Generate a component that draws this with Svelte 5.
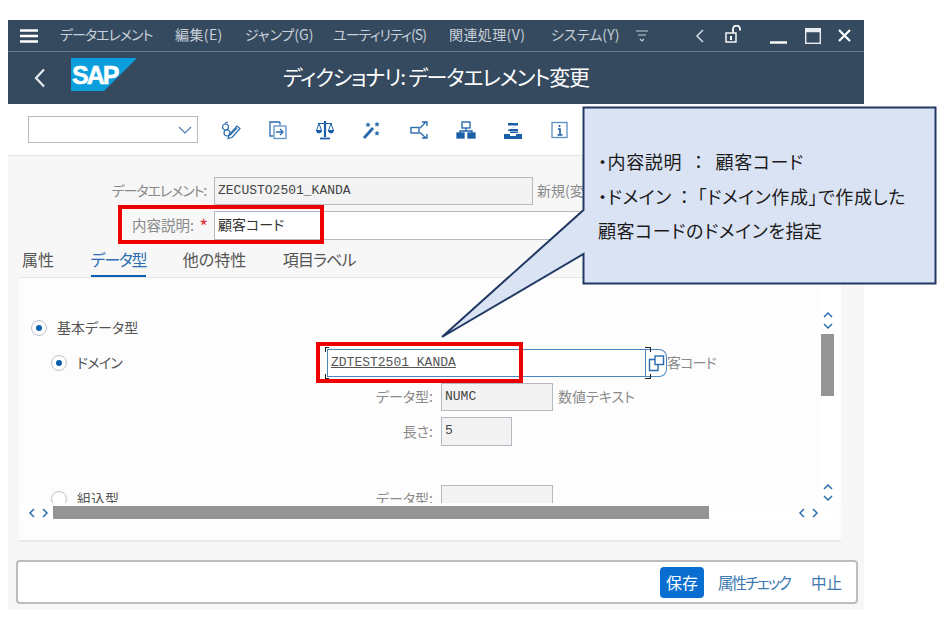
<script lang="ts">
	const menus = [
		{ label: 'データエレメント', w: 115, ls: -1 },
		{ label: '編集(E)', w: 70, ls: 0.4 },
		{ label: 'ジャンプ(G)', w: 88, ls: 0 },
		{ label: 'ユーティリティ(S)', w: 116, ls: -0.9 },
		{ label: '関連処理(V)', w: 102, ls: 0.4 },
		{ label: 'システム(Y)', w: 85, ls: 0.1 }
	];
	const tabs = [
		{ label: '属性', active: false, ls: 0 },
		{ label: 'データ型', active: true, ls: -1.25 },
		{ label: '他の特性', active: false, ls: 0 },
		{ label: '項目ラベル', active: false, ls: -0.8 }
	];
</script>

<div class="page">
	<div class="window">
		<header class="menubar">
			<svg class="burger" width="18" height="14" viewBox="0 0 18 14">
				<path d="M0 1.5h18M0 7h18M0 12.5h18" stroke="#fff" stroke-width="2.4" />
			</svg>
			<div class="menus">
				{#each menus as m}
					<span style="width:{m.w}px;letter-spacing:{m.ls}px">{m.label}</span>
				{/each}
			</div>
			<svg class="more" width="12" height="14" viewBox="0 0 12 14" fill="none" stroke="#c3ccd6">
				<path d="M0 2h12M2 6h8M4 10l2 2 2-2" stroke-width="1.2" />
			</svg>
			<svg class="collapse" width="10" height="16" viewBox="0 0 10 16" fill="none" stroke="#d5dbe2" stroke-width="1.5">
				<path d="M8 2L2 8l6 6" />
			</svg>
			<svg class="lock" width="18" height="18" viewBox="0 0 18 18" fill="none" stroke="#fff" stroke-width="1.4">
				<rect x="1" y="8" width="10" height="9" />
				<path d="M6 11v4" stroke-width="2" />
				<path d="M8 8V4a3.500 3.500 0 0 1 7 0v1.500" stroke-width="1.800" />
			</svg>
			<div class="wincontrols">
				<svg width="17" height="16" viewBox="0 0 17 16"><path d="M0 14.500h17" stroke="#fff" stroke-width="2.400" /></svg>
				<svg width="16" height="16" viewBox="0 0 16 16" fill="none" stroke="#e8ecf0">
					<rect x="0.700" y="0.700" width="14.600" height="14.600" stroke-width="1.400" />
					<path d="M0 2.500h16" stroke-width="3.500" />
				</svg>
				<svg width="13" height="13" viewBox="0 0 13 13"><path d="M1 1l11 11M12 1L1 12" stroke="#fff" stroke-width="2.200" /></svg>
			</div>
		</header>

		<div class="titlebar">
			<svg class="back" width="12" height="20" viewBox="0 0 12 20" fill="none" stroke="#e6ebf0" stroke-width="2.200">
				<path d="M10 1.500L2 10l8 8.500" />
			</svg>
			<svg class="logo" width="66" height="33" viewBox="0 0 66 33">
				<path d="M0 0H66L33 33H0Z" fill="#0a9fdc" />
				<text x="1" y="26" class="logotext">SAP</text>
			</svg>
			<h1>ディクショナリ: データエレメント変更</h1>
		</div>

		<div class="toolbar">
			<div class="select">
				<svg width="14" height="8" viewBox="0 0 14 8" fill="none" stroke="#4a7eb0" stroke-width="1.200">
					<path d="M1 1l6 6 6-6" />
				</svg>
			</div>
			<div class="tools">
				<svg width="20" height="20" viewBox="0 0 20 20" fill="none" stroke="#2a6aad" stroke-width="1.200">
					<circle cx="4.500" cy="7" r="3" />
					<circle cx="6" cy="13" r="3" />
					<path d="M4 4q1-2 3-2" />
					<path d="M8 15L16 6l3 2.500-8 9-4 1Z" />
					<path d="M9 15l7-7" />
				</svg>
				<svg width="20" height="20" viewBox="0 0 20 20" fill="none" stroke="#2a6aad" stroke-width="1.300">
					<path d="M12 2H2v14h3" />
					<path d="M12 2v3" />
					<rect x="6" y="6" width="12" height="12.500" stroke="#5a90c6" />
					<path d="M8 12h7M12 9l3 3-3 3" />
				</svg>
				<svg width="20" height="20" viewBox="0 0 20 20" fill="none" stroke="#1b5fa8" stroke-width="1">
					<path d="M10 1v16" stroke-width="2.200" />
					<path d="M5 18.500h10" stroke-width="1.800" />
					<path d="M3 3.500h14M4 3.500l-2.500 7h5ZM16 3.500l-2.500 7h5Z" />
					<path d="M1.500 10.500a2.500 2.500 0 0 0 5 0ZM13.500 10.500a2.500 2.500 0 0 0 5 0Z" fill="#1b5fa8" />
				</svg>
				<svg width="20" height="20" viewBox="0 0 20 20" fill="#2a6aad" stroke="#2a6aad">
					<path d="M2 18L11 8" stroke-width="3" />
					<path d="M6 2l.8 1.800 1.800.2-1.300 1.200.4 1.800L6 6.200l-1.700.8.400-1.800L3.400 4l1.800-.2Z" stroke="none" />
					<path d="M15 1.500l.8 1.800 1.800.2-1.300 1.200.4 1.800-1.700-.8-1.700.8.400-1.800L12.400 3.500l1.800-.2Z" stroke="none" />
					<path d="M15 10.500l.8 1.800 1.800.2-1.300 1.200.4 1.800-1.700-.8-1.700.8.400-1.800-1.300-1.200 1.800-.2Z" stroke="none" />
				</svg>
				<svg width="20" height="20" viewBox="0 0 20 20" fill="none" stroke="#2a6aad" stroke-width="1.400">
					<rect x="2" y="7.500" width="8" height="5.500" />
					<path d="M11 8l6-6M13 2h5v4M11 12.500l6 5.500M13 18h5v-4" />
				</svg>
				<svg width="20" height="20" viewBox="0 0 20 20" fill="none" stroke="#1b5fa8" stroke-width="1.300">
					<rect x="6" y="2" width="8" height="6" />
					<path d="M10 8v3M4 13v-2h12v2" />
					<rect x="1" y="13" width="7" height="5" fill="#1b5fa8" />
					<rect x="12" y="13" width="7" height="5" fill="#1b5fa8" />
				</svg>
				<svg width="20" height="20" viewBox="0 0 20 20" fill="#1b5fa8">
					<rect x="5" y="3" width="10" height="2.500" />
					<path d="M14 6L7 9h8v2H5v-1l6-3Z" />
					<rect x="7" y="11.500" width="8" height="1.500" />
					<path d="M1 14h6v2h6v-2h6v5H1Z" />
				</svg>
				<svg width="20" height="20" viewBox="0 0 20 20" fill="none" stroke="#5a90c6" stroke-width="1.300">
					<rect x="2" y="2.500" width="15" height="15" />
					<path d="M8 9h2v6M7.500 15h5M9.500 5v2" stroke="#1b5fa8" stroke-width="1.600" />
				</svg>
			</div>
		</div>

		<main class="body">
			<div class="form">
				<div class="frow">
					<label class="squeeze" for="elem">データエレメント:</label>
					<div class="input readonly wide latin" id="elem">ZECUSTO2501_KANDA</div>
					<span class="muted status">新規(変更)</span>
				</div>
				<div class="frow">
					<label class="desc-label" for="desc">内容説明:<b class="req">*</b></label>
					<div class="input plain" id="desc">顧客コード</div>
				</div>
			</div>

			<nav class="tabs">
				{#each tabs as t}
					<span class:active={t.active} style="letter-spacing:{t.ls}px">{t.label}</span>
				{/each}
			</nav>

			<section class="panel">
				<div class="upper">
					<div class="viewport">
						<div class="row first">
							<i class="radio on"></i><span class="dark">基本データ型</span>
						</div>
						<div class="row domain">
							<div class="opt"><i class="radio on"></i><span class="dark tight">ドメイン</span></div>
							<div class="focus">
								<div class="input latin link">ZDTEST2501_KANDA</div>
								<i class="bracket left"></i>
								<i class="bracket right"></i>
							</div>
							<button class="vh" aria-label="値ヘルプ">
								<svg width="19" height="19" viewBox="0 0 19 19" fill="none" stroke="#2a6aad" stroke-width="1.400">
									<rect x="8" y="2" width="8.500" height="8.500" />
									<path d="M8 5.500H2.500v11H11V11" />
								</svg>
							</button>
							<span class="muted tight">客コード</span>
						</div>
						<div class="row sub">
							<span class="lbl">データ型:</span>
							<div class="input readonly mid latin">NUMC</div>
							<span class="muted note">数値テキスト</span>
						</div>
						<div class="row sub short">
							<span class="lbl">長さ:</span>
							<div class="input readonly small latin">5</div>
						</div>
						<div class="row builtin">
							<div class="opt wideopt"><i class="radio"></i><span class="dark">組込型</span></div>
							<span class="lbl inline">データ型:</span>
							<div class="input readonly mid"></div>
						</div>
					</div>
					<div class="vscroll">
						<span class="arrows top">
							<svg width="10" height="7" viewBox="0 0 10 7"><path d="M1 6l4-4 4 4" /></svg>
							<svg width="10" height="7" viewBox="0 0 10 7"><path d="M1 1l4 4 4-4" /></svg>
						</span>
						<i class="thumb"></i>
						<span class="arrows bottom">
							<svg width="10" height="7" viewBox="0 0 10 7"><path d="M1 6l4-4 4 4" /></svg>
							<svg width="10" height="7" viewBox="0 0 10 7"><path d="M1 1l4 4 4-4" /></svg>
						</span>
					</div>
				</div>
				<div class="hscroll">
					<span class="harrows">
						<svg width="7" height="10" viewBox="0 0 7 10"><path d="M6 1L2 5l4 4" /></svg>
						<svg width="7" height="10" viewBox="0 0 7 10"><path d="M1 1l4 4-4 4" /></svg>
					</span>
					<i class="hthumb"></i>
					<span class="harrows right">
						<svg width="7" height="10" viewBox="0 0 7 10"><path d="M6 1L2 5l4 4" /></svg>
						<svg width="7" height="10" viewBox="0 0 7 10"><path d="M1 1l4 4-4 4" /></svg>
					</span>
				</div>
			</section>

			<footer class="actions">
				<button class="primary">保存</button>
				<button class="ghost check">属性チェック</button>
				<button class="ghost">中止</button>
			</footer>
		</main>
	</div>

	<!-- annotations drawn over the screenshot -->
	<i class="mark mark-desc"></i>
	<i class="mark mark-domain"></i>
	<svg class="callout-shape" width="952" height="624" viewBox="0 0 952 624">
		<path d="M583.500 107.500H935.500V283.500H583.500V254L442 337 583.500 210Z" fill="#dae3f3" stroke="#203864" stroke-width="2" />
	</svg>
	<div class="callout">
		<p>・内容説明<span class="colon">：</span>顧客コード</p>
		<p>・ドメイン<span class="colon narrow">：</span>「ドメイン作成」で作成した</p>
		<p>顧客コードのドメインを指定</p>
	</div>
</div>

<style>
	:global(body) {
		margin: 0;
		background: #fff;
	}
	.page {
		position: relative;
		width: 952px;
		height: 624px;
		overflow: hidden;
		font-family: 'Noto Sans CJK JP', 'Liberation Sans', sans-serif;
		font-feature-settings: 'palt';
	}
	.window {
		position: absolute;
		left: 8px;
		top: 20px;
		width: 856px;
		height: 590px;
		display: flex;
		flex-direction: column;
		background: #f7f7f7;
	}
	.menubar {
		height: 31px;
		flex: none;
		display: flex;
		align-items: center;
		background: #354a5f;
		border-bottom: 1px solid #5d7a96;
		color: #c8d0d9;
		font-size: 14px;
	}
	.burger {
		margin-left: 12px;
	}
	.menus {
		display: flex;
		margin-left: 22px;
		width: 576px;
		padding-bottom: 3px;
	}
	.menus span {
		flex: none;
		white-space: nowrap;
	}
	.more {
		margin-left: 0;
	}
	.collapse {
		margin-left: 47px;
	}
	.lock {
		margin-left: 20px;
		margin-top: -3px;
	}
	.wincontrols {
		display: flex;
		align-items: center;
		margin-left: 27px;
		gap: 17.500px;
	}
	.titlebar {
		height: 52px;
		flex: none;
		display: flex;
		align-items: center;
		position: relative;
		background: #354a5f;
		color: #fff;
	}
	.back {
		margin-left: 26px;
	}
	.logo {
		margin-left: 25px;
		margin-top: -8px;
	}
	.logotext {
		font-family: 'Liberation Sans', sans-serif;
		font-size: 25px;
		font-weight: 700;
		letter-spacing: -2px;
		fill: #fff;
		stroke: #fff;
		stroke-width: 0.5px;
	}
	h1 {
		margin: 0 0 4px 146px;
		font-size: 21px;
		font-weight: 400;
		letter-spacing: -1.200px;
		white-space: nowrap;
	}
	.toolbar {
		height: 51px;
		flex: none;
		display: flex;
		align-items: center;
		background: #fff;
		border-bottom: 1px solid #e5e5e5;
	}
	.select {
		width: 168px;
		height: 25px;
		margin-left: 20px;
		border: 1px solid #b4bac1;
		background: #fff;
		display: flex;
		align-items: center;
		justify-content: flex-end;
	}
	.select svg {
		margin-right: 5px;
	}
	.tools {
		display: flex;
		gap: 27px;
		margin-left: 23px;
		align-items: center;
	}
	.body {
		flex: 1;
		display: flex;
		flex-direction: column;
		min-height: 0;
	}
	.form {
		padding-top: 21px;
		display: flex;
		flex-direction: column;
		gap: 6px;
	}
	.frow {
		display: flex;
		align-items: center;
		height: 28px;
		font-size: 14px;
		color: #8a8a8a;
	}
	.frow label {
		width: 198px;
		text-align: right;
		flex: none;
		margin-right: 8px;
		white-space: nowrap;
		padding-bottom: 2px;
		box-sizing: border-box;
	}
	.squeeze {
		letter-spacing: -1.100px;
	}
	.desc-label {
		font-size: 14.500px;
	}
	.req {
		color: #d9363e;
		font-weight: 400;
		font-size: 19px;
		line-height: 14px;
		margin-left: 5px;
		margin-right: -2px;
		vertical-align: -3px;
	}
	.input {
		box-sizing: border-box;
		height: 28px;
		border: 1px solid #b4bac1;
		padding-left: 3px;
		font-size: 14px;
		line-height: 25px;
		color: #333;
		white-space: nowrap;
		overflow: hidden;
		flex: none;
	}
	.latin {
		font-family: 'Liberation Mono', monospace;
		font-size: 13px;
		letter-spacing: 0;
		color: #444;
	}
	.readonly {
		background: #f3f3f3;
	}
	.wide {
		width: 319px;
	}
	.plain {
		width: 500px;
		background: #fff;
		height: 29px;
	}
	.status {
		margin-left: 4px;
		white-space: nowrap;
	}
	.tabs {
		display: flex;
		gap: 36.500px;
		height: 38px;
		flex: none;
		margin-left: 11px;
		align-items: flex-end;
		font-size: 16px;
		color: #555;
		border-bottom: 1px solid #e5e5e5;
		padding-left: 3px;
	}
	.tabs span {
		height: 28px;
		line-height: 20px;
		box-sizing: border-box;
		white-space: nowrap;
	}
	.tabs .active {
		color: #2a6db0;
		border-bottom: 2px solid #0a5fb0;
	}
	.panel {
		margin-left: 11px;
		width: 822px;
		height: 264px;
		flex: none;
		box-sizing: border-box;
		background: #fdfdfd;
		border-bottom: 2px solid #e8e8e8;
	}
	.upper {
		display: flex;
		height: 225px;
	}
	.viewport {
		width: 802px;
		height: 225px;
		overflow: hidden;
		flex: none;
		padding-top: 36px;
		box-sizing: border-box;
	}
	.row {
		display: flex;
		align-items: center;
		font-size: 14px;
		white-space: nowrap;
	}
	.first {
		height: 28px;
		padding-left: 12px;
		gap: 10px;
	}
	.radio {
		display: inline-block;
		box-sizing: border-box;
		width: 16px;
		height: 16px;
		border-radius: 50%;
		border: 1.500px solid #b9c2cc;
		background: #fff;
		position: relative;
		flex: none;
	}
	.radio.on::after {
		content: '';
		position: absolute;
		left: 3.500px;
		top: 3.500px;
		width: 6px;
		height: 6px;
		border-radius: 50%;
		background: #0a5fb0;
	}
	.dark {
		color: #555;
		padding-bottom: 2px;
	}
	.tight {
		letter-spacing: -0.800px;
	}
	.muted {
		color: #8a8a8a;
		font-size: 14px;
		padding-bottom: 2px;
	}
	.domain {
		height: 28px;
		margin-top: 7px;
	}
	.opt {
		width: 308px;
		padding-left: 32px;
		box-sizing: border-box;
		display: flex;
		align-items: center;
		gap: 10px;
		flex: none;
	}
	.focus {
		position: relative;
		width: 319px;
		flex: none;
	}
	.focus .input {
		width: 319px;
		border: 1.500px solid #4a86c0;
		background: #fff;
	}
	.link {
		text-decoration: underline;
		color: #555;
	}
	.bracket {
		position: absolute;
		top: -2px;
		bottom: -2px;
		box-sizing: border-box;
		border-top: 1px solid #222;
		border-bottom: 1px solid #222;
		-webkit-mask: linear-gradient(#000 0 5px, transparent 5px calc(100% - 5px), #000 calc(100% - 5px));
		mask: linear-gradient(#000 0 5px, transparent 5px calc(100% - 5px), #000 calc(100% - 5px));
	}
	.bracket.left {
		left: -2px;
		width: 4px;
		border-left: 1px solid #222;
	}
	.bracket.right {
		right: -5px;
		width: 6px;
		border-right: 1px solid #222;
	}
	.vh {
		box-sizing: border-box;
		width: 21px;
		height: 28px;
		padding: 0 0 0 1px;
		border: 1.500px solid #4a86c0;
		border-left: none;
		border-radius: 0 8px 8px 0;
		background: #fff;
		display: flex;
		align-items: center;
		flex: none;
	}
	.sub {
		height: 28px;
		margin-top: 6px;
	}
	.short {
		height: 29px;
	}
	.lbl {
		width: 414px;
		box-sizing: border-box;
		text-align: right;
		margin-right: 8px;
		color: #8a8a8a;
		flex: none;
		padding-bottom: 2px;
	}
	.lbl.inline {
		width: 106px;
	}
	.mid {
		width: 112px;
	}
	.small {
		width: 71px;
		height: 29px;
	}
	.note {
		margin-left: 5px;
	}
	.builtin {
		height: 28px;
		margin-top: 39px;
	}
	.vscroll {
		width: 20px;
		flex: none;
		position: relative;
		background: #fff;
	}
	.thumb {
		position: absolute;
		left: 0;
		top: 56px;
		width: 13px;
		height: 62px;
		background: #949494;
	}
	.arrows {
		position: absolute;
		left: 2px;
		display: flex;
		flex-direction: column;
		gap: 5px;
	}
	.arrows.top {
		top: 33px;
	}
	.arrows.bottom {
		top: 205px;
	}
	.vscroll svg,
	.hscroll svg {
		fill: none;
		stroke: #2a6db0;
		stroke-width: 1.500;
	}
	.hscroll {
		display: flex;
		align-items: center;
		height: 13px;
		margin-top: 3px;
		width: 815px;
		background: #fff;
	}
	.harrows {
		display: flex;
		width: 34px;
		padding-left: 9px;
		box-sizing: border-box;
		gap: 7px;
		flex: none;
	}
	.harrows.right {
		padding-left: 0;
		margin-left: 89px;
	}
	.hthumb {
		width: 656px;
		height: 13px;
		background: #949494;
		flex: none;
	}
	.actions {
		box-sizing: border-box;
		width: 842px;
		height: 44px;
		margin: 18px 0 0 8px;
		padding-right: 14px;
		border: 2px solid #bdbdbd;
		border-radius: 4px;
		background: #fff;
		display: flex;
		align-items: center;
		justify-content: flex-end;
		gap: 21px;
	}
	.actions button {
		border: none;
		background: none;
		padding: 0;
		font: inherit;
		font-size: 15.500px;
		font-feature-settings: 'palt';
	}
	.actions .primary {
		width: 44px;
		height: 31px;
		background: #0a6ed1;
		color: #fff;
		border-radius: 4px;
		margin-right: -7px;
		font-size: 16px;
	}
	.actions .ghost {
		color: #3d78b0;
	}
	.actions .check {
		letter-spacing: -2px;
	}
	.mark {
		position: absolute;
		box-sizing: border-box;
		border: 4px solid #ee0000;
	}
	.mark-desc {
		left: 118px;
		top: 205px;
		width: 206px;
		height: 39px;
	}
	.mark-domain {
		left: 316px;
		top: 342px;
		width: 207px;
		height: 41px;
	}
	.callout-shape {
		position: absolute;
		left: 0;
		top: 0;
	}
	.callout {
		position: absolute;
		left: 598px;
		top: 144px;
		width: 330px;
		color: #1a1a1a;
		font-size: 18px;
		line-height: 34.500px;
		letter-spacing: 0.600px;
		white-space: nowrap;
	}
	.callout p {
		margin: 0;
	}
	.colon {
		margin: 0 12px;
	}
	.colon.narrow {
		margin: 0 8px;
	}
</style>
